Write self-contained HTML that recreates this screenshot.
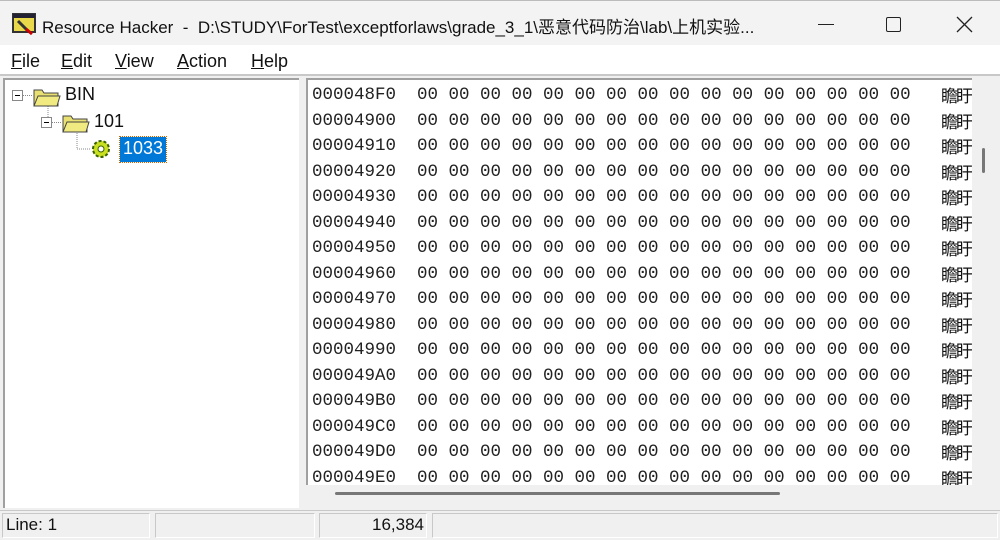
<!DOCTYPE html>
<html><head><meta charset="utf-8"><style>
*{margin:0;padding:0;box-sizing:border-box}
body{width:1000px;height:540px;overflow:hidden;background:#f0f0f0;font-family:"Liberation Sans","Noto Sans CJK SC",sans-serif;position:relative}
.title{position:absolute;left:0;top:0;width:1000px;height:45px;background:#f3f3f3;border-top:1px solid #bbb}
.title .t{position:absolute;left:42px;top:12px;font-size:17px;color:#111;white-space:nowrap}
.menu{position:absolute;left:0;top:45px;width:1000px;height:31px;background:#fff;border-bottom:2px solid #c8c8c8}
.menu span{position:absolute;top:6px;font-size:18px;color:#111}
.menu u{text-decoration:underline}
.tree{position:absolute;left:3px;top:78px;width:296px;height:430px;background:#fff;border-left:2px solid #a0a0a0;border-top:2px solid #a0a0a0}
.hex{position:absolute;left:306px;top:78px;width:666px;height:407px;background:#fff;border-left:2px solid #a0a0a0;border-top:2px solid #a0a0a0;overflow:hidden}
.row{position:absolute;left:4px;font-family:"Liberation Mono","Noto Sans CJK SC",monospace;font-size:17.5px;white-space:pre;color:#222;line-height:20px}
.ch{position:absolute;left:633px;font-family:"Noto Sans CJK SC",sans-serif;font-size:17px;line-height:20px;color:#111;white-space:pre;letter-spacing:-2px}
.status{position:absolute;top:513px;height:25px;border:1px solid #c8c8c8;border-right-color:#fff;border-bottom-color:#fff;font-size:17px;color:#111;padding-top:1px}
</style></head><body>
<div class="title">
<svg style="position:absolute;left:12px;top:12px" width="24" height="22"><rect x="1" y="1" width="22" height="18" fill="#e8d84a" stroke="#333" stroke-width="2"/><rect x="1" y="1" width="22" height="4" fill="#223"/><path d="M6 8 L16 18" stroke="#333" stroke-width="3"/><path d="M14 16 L20 21" stroke="#c00" stroke-width="3"/></svg>
<div class="t">Resource Hacker &nbsp;- &nbsp;D:\STUDY\ForTest\exceptforlaws\grade_3_1\恶意代码防治\lab\上机实验...</div>
<div style="position:absolute;left:818px;top:23px;width:16px;height:1px;background:#222"></div>
<div style="position:absolute;left:886px;top:16px;width:15px;height:15px;border:1.3px solid #222;border-radius:2px"></div>
<svg style="position:absolute;left:956px;top:15px" width="17" height="17"><path d="M1 1L16 16M16 1L1 16" stroke="#222" stroke-width="1.3"/></svg>
</div>
<div class="menu">
<span style="left:11px"><u>F</u>ile</span><span style="left:61px"><u>E</u>dit</span><span style="left:115px"><u>V</u>iew</span><span style="left:177px"><u>A</u>ction</span><span style="left:251px"><u>H</u>elp</span>
</div>
<div class="tree">
<svg style="position:absolute;left:0;top:0" width="200" height="90">
<rect x="7.5" y="10.5" width="10" height="10" fill="#fff" stroke="#888"/><path d="M10 15.5h5" stroke="#000"/>
<path d="M18 15.5h10M43 24v13" stroke="#888" stroke-dasharray="1 1" fill="none"/>
<path d="M29 10h8l2 3h14v13H29z" fill="#e8e070" stroke="#444"/><path d="M29 26l4-10h22l-3 10z" fill="#f0ea80" stroke="#444"/>
<rect x="36.5" y="37.5" width="10" height="10" fill="#fff" stroke="#888"/><path d="M39 42.5h5" stroke="#000"/>
<path d="M47 42.5h10M72 51v18h14" stroke="#888" stroke-dasharray="1 1" fill="none"/>
<path d="M58 36h8l2 3h14v13H58z" fill="#e8e070" stroke="#444"/><path d="M58 52l4-10h22l-3 10z" fill="#f0ea80" stroke="#444"/>
<circle cx="96" cy="69" r="8" fill="#c8e020" stroke="#3a6000" stroke-width="2" stroke-dasharray="3 2"/><circle cx="96" cy="69" r="3" fill="#fff" stroke="#3a6000"/>
</svg>
<div style="position:absolute;left:60px;top:4px;font-size:18px;color:#111">BIN</div>
<div style="position:absolute;left:89px;top:31px;font-size:18px;color:#111">101</div>
<div style="position:absolute;left:115px;top:57px;height:25px;padding:1px 3px;font-size:18px;color:#fff;background:#0078d7;outline:1px dotted #c60">1033</div>
</div>
<div class="hex">
<div class="row" style="top:5px">000048F0  00 00 00 00 00 00 00 00 00 00 00 00 00 00 00 00</div><div class="ch" style="top:5px">瞻盱</div>
<div class="row" style="top:30.5px">00004900  00 00 00 00 00 00 00 00 00 00 00 00 00 00 00 00</div><div class="ch" style="top:30.5px">瞻盱</div>
<div class="row" style="top:56px">00004910  00 00 00 00 00 00 00 00 00 00 00 00 00 00 00 00</div><div class="ch" style="top:56px">瞻盱</div>
<div class="row" style="top:81.5px">00004920  00 00 00 00 00 00 00 00 00 00 00 00 00 00 00 00</div><div class="ch" style="top:81.5px">瞻盱</div>
<div class="row" style="top:107px">00004930  00 00 00 00 00 00 00 00 00 00 00 00 00 00 00 00</div><div class="ch" style="top:107px">瞻盱</div>
<div class="row" style="top:132.5px">00004940  00 00 00 00 00 00 00 00 00 00 00 00 00 00 00 00</div><div class="ch" style="top:132.5px">瞻盱</div>
<div class="row" style="top:158px">00004950  00 00 00 00 00 00 00 00 00 00 00 00 00 00 00 00</div><div class="ch" style="top:158px">瞻盱</div>
<div class="row" style="top:183.5px">00004960  00 00 00 00 00 00 00 00 00 00 00 00 00 00 00 00</div><div class="ch" style="top:183.5px">瞻盱</div>
<div class="row" style="top:209px">00004970  00 00 00 00 00 00 00 00 00 00 00 00 00 00 00 00</div><div class="ch" style="top:209px">瞻盱</div>
<div class="row" style="top:234.5px">00004980  00 00 00 00 00 00 00 00 00 00 00 00 00 00 00 00</div><div class="ch" style="top:234.5px">瞻盱</div>
<div class="row" style="top:260px">00004990  00 00 00 00 00 00 00 00 00 00 00 00 00 00 00 00</div><div class="ch" style="top:260px">瞻盱</div>
<div class="row" style="top:285.5px">000049A0  00 00 00 00 00 00 00 00 00 00 00 00 00 00 00 00</div><div class="ch" style="top:285.5px">瞻盱</div>
<div class="row" style="top:311px">000049B0  00 00 00 00 00 00 00 00 00 00 00 00 00 00 00 00</div><div class="ch" style="top:311px">瞻盱</div>
<div class="row" style="top:336.5px">000049C0  00 00 00 00 00 00 00 00 00 00 00 00 00 00 00 00</div><div class="ch" style="top:336.5px">瞻盱</div>
<div class="row" style="top:362px">000049D0  00 00 00 00 00 00 00 00 00 00 00 00 00 00 00 00</div><div class="ch" style="top:362px">瞻盱</div>
<div class="row" style="top:387.5px">000049E0  00 00 00 00 00 00 00 00 00 00 00 00 00 00 00 00</div><div class="ch" style="top:387.5px">瞻盱</div>
</div>
<div style="position:absolute;left:335px;top:492px;width:445px;height:3px;background:#777;border-radius:2px"></div>
<div style="position:absolute;left:982px;top:148px;width:3px;height:25px;background:#777;border-radius:2px"></div>
<div style="position:absolute;left:0;top:510px;width:1000px;height:1px;background:#c8c8c8"></div>
<div class="status" style="left:2px;width:148px;padding-left:3px">Line: 1</div>
<div class="status" style="left:155px;width:160px"></div>
<div class="status" style="left:319px;width:108px;text-align:right;padding-right:2px">16,384</div>
<div class="status" style="left:432px;width:566px"></div>
</body></html>
